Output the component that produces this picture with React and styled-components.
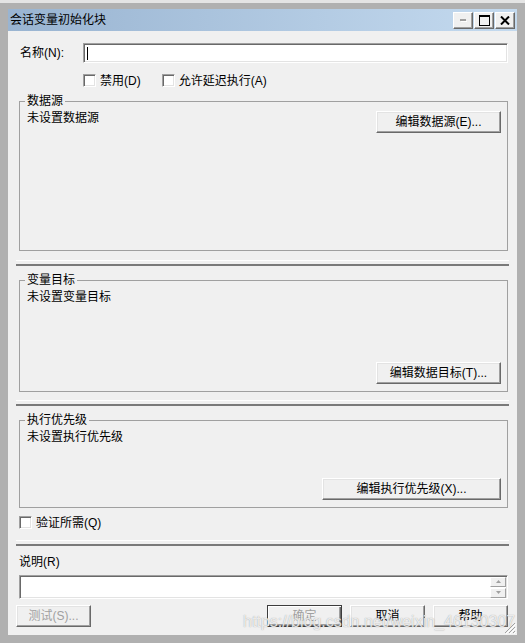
import React from 'react';
import styled, { createGlobalStyle } from 'styled-components';

const GlobalStyle = createGlobalStyle`
  html, body {
    margin: 0;
    padding: 0;
  }
  body {
    background: #b0b0b0;
    font-family: "Liberation Sans", "Noto Sans CJK SC", sans-serif;
    font-size: 12px;
    color: #000;
  }
`;

const Frame = styled.div`
  width: 525px;
  height: 643px;
  box-sizing: border-box;
  border-top: 3px solid #e4e4e4;
  padding: 6px 8px 8px 8px;
  background: #b0b0b0;
`;

const Window = styled.div`
  position: relative;
  display: flex;
  flex-direction: column;
  height: 100%;
`;

const TitleBar = styled.div`
  height: 22px;
  flex: none;
  display: flex;
  align-items: flex-start;
  padding: 0 2px;
  background: linear-gradient(90deg, #99b4d1 0%, #c4daef 100%);
`;

const Title = styled.div`
  flex: 1;
  line-height: 14px;
  margin-top: 4px;
`;

const TitleButtons = styled.div`
  display: flex;
  gap: 1px;
  margin-top: 3px;
`;

const TitleButton = styled.div`
  width: 20px;
  height: 17px;
  box-sizing: border-box;
  display: flex;
  align-items: center;
  justify-content: center;
  background: #f0f0f0;
  border: 1px solid;
  border-color: #fff #696969 #696969 #fff;
  box-shadow: inset -1px -1px #a0a0a0;
`;

const Body = styled.div`
  flex: 1;
  display: flex;
  flex-direction: column;
  background: #f0f0f0;
  padding: 12px 9px 8px 11px;
`;

const NameRow = styled.div`
  display: flex;
  align-items: center;
  margin-left: 1px;
`;

const NameLabel = styled.div`
  width: 63px;
  line-height: 14px;
`;

const Field = styled.div`
  flex: 1;
  height: ${p => p.$h}px;
  box-sizing: border-box;
  display: flex;
  align-items: center;
  padding-left: 3px;
  background: #fff;
  border: 1px solid;
  border-color: #a0a0a0 #fff #fff #a0a0a0;
  box-shadow: inset 1px 1px #696969, inset -1px -1px #e3e3e3;
`;

const Caret = styled.span`
  width: 1px;
  height: 13px;
  background: #000;
`;

const CheckRow = styled.div`
  display: flex;
  gap: 21px;
  margin-top: ${p => p.$mt}px;
  margin-left: ${p => p.$ml || 0}px;
`;

const CheckLabel = styled.label`
  display: inline-flex;
  align-items: center;
  gap: 4px;
  height: 13px;
  line-height: 14px;
`;

const Box = styled.span`
  width: 13px;
  height: 13px;
  box-sizing: border-box;
  background: #fff;
  border: 1px solid;
  border-color: #a0a0a0 #fff #fff #a0a0a0;
  box-shadow: inset 1px 1px #696969, inset -1px -1px #e3e3e3;
`;

const Group = styled.div`
  display: flex;
  flex-direction: column;
  height: ${p => p.$h}px;
  box-sizing: border-box;
  margin-top: 14px;
  padding: 0 6px 7px 7px;
  border: 1px solid #a0a0a0;
`;

const Legend = styled.div`
  align-self: flex-start;
  margin: -8px 0 0 -2px;
  padding: 0 2px;
  line-height: 14px;
  background: #f0f0f0;
`;

const GroupRow = styled.div`
  display: flex;
  justify-content: space-between;
  align-items: flex-start;
  margin-top: 3px;
`;

const Desc = styled.div`
  line-height: 14px;
  margin-top: ${p => p.$mt || 0}px;
`;

const GroupFooter = styled.div`
  display: flex;
  justify-content: flex-end;
  margin-top: auto;
`;

const Separator = styled.div`
  height: 6px;
  flex: none;
  box-sizing: border-box;
  margin: ${p => p.$mt}px -1px 0 -3px;
  border-top: 1px solid #fff;
  border-bottom: 2px solid #7a7a7a;
`;

const Button = styled.button`
  width: ${p => p.$w}px;
  height: 22px;
  box-sizing: border-box;
  padding: 0;
  font: inherit;
  line-height: 14px;
  color: ${p => (p.disabled ? '#a0a0a0' : '#000')};
  background: #f0f0f0;
  border: 1px solid;
  border-color: ${p => (p.$default ? '#3c3c3c' : '#fff #696969 #696969 #fff')};
  box-shadow: ${p =>
    p.$default
      ? 'inset 1px 1px #fff, inset -1px -1px #696969, inset -2px -2px #a0a0a0'
      : 'inset -1px -1px #a0a0a0, inset 1px 1px #e3e3e3'};
`;

const Caption = styled.div`
  line-height: 14px;
  margin-top: 9px;
`;

const NotesRow = styled.div`
  display: flex;
  margin-top: 6px;
`;

const Spin = styled.div`
  display: flex;
  flex-direction: column;
  gap: 1px;
  margin-left: auto;
  margin-right: 1px;
`;

const SpinButton = styled.div`
  width: 16px;
  height: 10px;
  box-sizing: border-box;
  display: flex;
  align-items: center;
  justify-content: center;
  background: #f0f0f0;
  border: 1px solid;
  border-color: #fff #a0a0a0 #a0a0a0 #fff;
`;

const ButtonRow = styled.div`
  display: flex;
  gap: 8px;
  margin: 6px 0 0 -3px;
`;

const Spacer = styled.div`
  flex: 1;
`;

const Grip = styled.svg`
  position: absolute;
  right: 1px;
  bottom: 1px;
`;

const Watermark = styled.div`
  position: absolute;
  left: 235px;
  top: 604px;
  font-size: 16px;
  line-height: 18px;
  color: rgba(255, 255, 255, 0.8);
  text-shadow: 0 0 1px rgba(110, 110, 110, 0.7);
  pointer-events: none;
  white-space: nowrap;
`;

const Check = ({ children }) => (
  <CheckLabel>
    <Box />
    {children}
  </CheckLabel>
);

const App = () => {
  return (
    <>
      <GlobalStyle />
      <Frame>
        <Window>
          <TitleBar>
            <Title>会话变量初始化块</Title>
            <TitleButtons>
              <TitleButton>
                <svg width="8" height="4" viewBox="0 0 8 4">
                  <rect x="1" y="0" width="6" height="2" fill="#a0a0a0" />
                  <rect x="2" y="2" width="6" height="1" fill="#fff" />
                </svg>
              </TitleButton>
              <TitleButton>
                <svg width="11" height="11" viewBox="0 0 11 11">
                  <rect x="0.5" y="0.5" width="10" height="10" fill="none" stroke="#000" />
                  <rect x="0" y="0" width="11" height="2" fill="#000" />
                </svg>
              </TitleButton>
              <TitleButton>
                <svg width="10" height="9" viewBox="0 0 10 9">
                  <path d="M1 0.5 L9 8.5 M9 0.5 L1 8.5" stroke="#000" strokeWidth="2" />
                </svg>
              </TitleButton>
            </TitleButtons>
          </TitleBar>

          <Body>
            <NameRow>
              <NameLabel>名称(N):</NameLabel>
              <Field $h={20}>
                <Caret />
              </Field>
            </NameRow>

            <CheckRow $mt={11} $ml={64}>
              <Check>禁用(D)</Check>
              <Check>允许延迟执行(A)</Check>
            </CheckRow>

            <Group $h={150}>
              <Legend>数据源</Legend>
              <GroupRow>
                <Desc>未设置数据源</Desc>
                <Button $w={125}>编辑数据源(E)...</Button>
              </GroupRow>
            </Group>

            <Separator $mt={9} />

            <Group $h={112}>
              <Legend>变量目标</Legend>
              <Desc $mt={3}>未设置变量目标</Desc>
              <GroupFooter>
                <Button $w={125}>编辑数据目标(T)...</Button>
              </GroupFooter>
            </Group>

            <Separator $mt={8} />

            <Group $h={88}>
              <Legend>执行优先级</Legend>
              <Desc $mt={3}>未设置执行优先级</Desc>
              <GroupFooter>
                <Button $w={179}>编辑执行优先级(X)...</Button>
              </GroupFooter>
            </Group>

            <CheckRow $mt={8}>
              <Check>验证所需(Q)</Check>
            </CheckRow>

            <Separator $mt={11} />

            <Caption>说明(R)</Caption>
            <NotesRow>
              <Field $h={24}>
                <Spin>
                  <SpinButton>
                    <svg width="5" height="3" viewBox="0 0 5 3">
                      <path d="M2.5 0 L5 3 L0 3 Z" fill="#a0a0a0" />
                    </svg>
                  </SpinButton>
                  <SpinButton>
                    <svg width="5" height="3" viewBox="0 0 5 3">
                      <path d="M0 0 L5 0 L2.5 3 Z" fill="#a0a0a0" />
                    </svg>
                  </SpinButton>
                </Spin>
              </Field>
            </NotesRow>

            <ButtonRow>
              <Button $w={75} disabled>测试(S)...</Button>
              <Spacer />
              <Button $w={75} $default disabled>确定</Button>
              <Button $w={75}>取消</Button>
              <Button $w={75}>帮助</Button>
            </ButtonRow>
          </Body>

          <Watermark>https://blog.csdn.net/weixin_46130307</Watermark>
          <Grip width="12" height="12" viewBox="0 0 12 12">
            <path d="M11 1 L1 11 M11 5 L5 11 M11 9 L9 11" stroke="#a0a0a0" strokeWidth="1" />
            <path d="M12 2 L2 12 M12 6 L6 12 M12 10 L10 12" stroke="#fff" strokeWidth="1" />
          </Grip>
        </Window>
      </Frame>
    </>
  );
};

export default App;
